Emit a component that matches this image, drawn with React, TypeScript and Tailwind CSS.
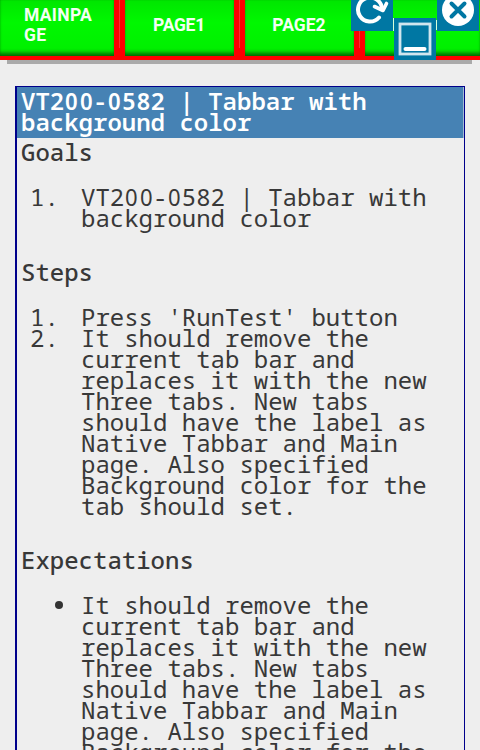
import type { ReactNode } from "react";

// Plain zero without the inner slash, kept on the monospace pitch.
function Zero() {
  return <span className="inline-block w-[0.6em] scale-x-92 text-center font-['Noto_Sans','Liberation_Sans',sans-serif]">0</span>;
}

function CaseName() {
  return (
    <>
      VT2<Zero /><Zero />-<Zero />582 | Tabbar with
      <br />
      background color
    </>
  );
}

function Tab({ className, children }: { className: string; children?: ReactNode }) {
  return (
    <div className={`flex h-14 shrink-0 items-center bg-linear-to-b from-[#00e600] from-0% via-[#00f800] via-40% to-[#00ee00] shadow-[inset_0_-5px_4px_-2px_#006400,inset_0_0_1px_#008000] ${className}`}>
      {children}
    </div>
  );
}

function Separator() {
  return <div className="flex h-12 w-[11px] shrink-0 justify-center"><div className="w-px bg-[#ff3030]" /></div>;
}

function Heading({ children }: { children: ReactNode }) {
  return <h2 className="pl-1 font-medium">{children}</h2>;
}

function Item({ marker, children }: { marker: string; children: ReactNode }) {
  return (
    <li className="flex">
      <span className="w-[64px] shrink-0 pl-[13px]">{marker}</span>
      <span className="whitespace-nowrap">{children}</span>
    </li>
  );
}

function Replacement() {
  return (
    <>
      It should remove the<br />current tab bar and<br />replaces it with the new<br />Three tabs. New tabs<br />
      should have the label as<br />Native Tabbar and Main<br />page. Also specified<br />Background color for the<br />tab should set.
    </>
  );
}

export default function App() {
  return (
    <div className="relative flex h-[750px] w-[480px] flex-col overflow-hidden bg-[#eeeeee]">
      <header className="flex h-[60px] shrink-0 bg-[#ff0000] font-['Roboto',sans-serif] text-[17.5px] leading-5 font-bold text-[#f3fff3]">
        <Tab className="w-[114px] pl-6 pb-[7px] tracking-[0.3px]"><span>MAINPA<br />GE</span></Tab>
        <Separator />
        <Tab className="w-[109px] justify-center pr-px pb-[6px] tracking-[-0.3px]">PAGE1</Tab>
        <Separator />
        <Tab className="w-[109px] justify-center pr-px pb-[6px]">PAGE2</Tab>
        <Separator />
        <Tab className="w-[115px]" />
      </header>
      <div className="mr-2 ml-[7px] h-1 shrink-0 bg-[#aaaaaa]" />
      <main className="mx-[15px] mt-[22px] h-[700px] shrink-0 border-t border-r border-l-2 border-[#00008b] font-['Noto_Sans_Mono','DejaVu_Sans_Mono',monospace] text-[24px] leading-[21px] font-normal text-[#383838]">
        <h1 className="h-[51px] border-r border-[#a5bdd5] bg-[#4682b4] pt-[3px] pl-1 font-semibold text-white"><CaseName /></h1>
        <section className="pt-[3px]">
          <Heading>Goals</Heading>
          <ol className="mt-6"><Item marker="1."><CaseName /></Item></ol>
        </section>
        <section className="mt-[33px]">
          <Heading>Steps</Heading>
          <ol className="mt-6"><Item marker="1.">Press 'RunTest' button</Item><Item marker="2."><Replacement /></Item></ol>
        </section>
        <section className="mt-[33px]">
          <Heading>Expectations</Heading>
          <ul className="mt-6">
            <li className="flex">
              <span className="flex w-[64px] shrink-0 pt-[7px] pl-[38px]"><span className="size-2 rounded-full bg-[#333333]" /></span>
              <span className="whitespace-nowrap"><Replacement /></span>
            </li>
          </ul>
        </section>
      </main>
      <svg className="absolute top-0 left-[351px]" width="42" height="31" viewBox="0 0 42 31">
        <rect width="42" height="31" fill="#0077a3" />
        <path d="M28 17.5A12 12 0 1 1 31 9" fill="none" stroke="white" strokeWidth="4" strokeLinecap="round" />
        <path d="M23.5 6.5l8.5 4 3.5-7" fill="none" stroke="white" strokeWidth="3.6" strokeLinecap="round" strokeLinejoin="round" />
      </svg>
      <svg className="absolute top-0 left-[437px]" width="42" height="31" viewBox="0 0 42 31">
        <rect width="42" height="31" fill="#0077a3" />
        <circle cx="21" cy="10" r="16" fill="white" />
        <path d="M14.5 3.5l13 13M27.5 3.5l-13 13" stroke="#0077a3" strokeWidth="4" strokeLinecap="round" />
      </svg>
      <svg className="absolute top-[18px] left-[393px]" width="44" height="42" viewBox="0 0 44 42">
        <path d="M0.5 0v13M43.5 2v10" stroke="#d8ffd8" />
        <rect x="1" width="42" height="42" fill="#0077a3" />
        <rect x="7" y="6" width="30" height="30" fill="none" stroke="#d0e6ee" strokeWidth="2.8" />
        <path d="M12.5 31h19" stroke="white" strokeWidth="4" strokeLinecap="round" />
      </svg>
    </div>
  );
}
